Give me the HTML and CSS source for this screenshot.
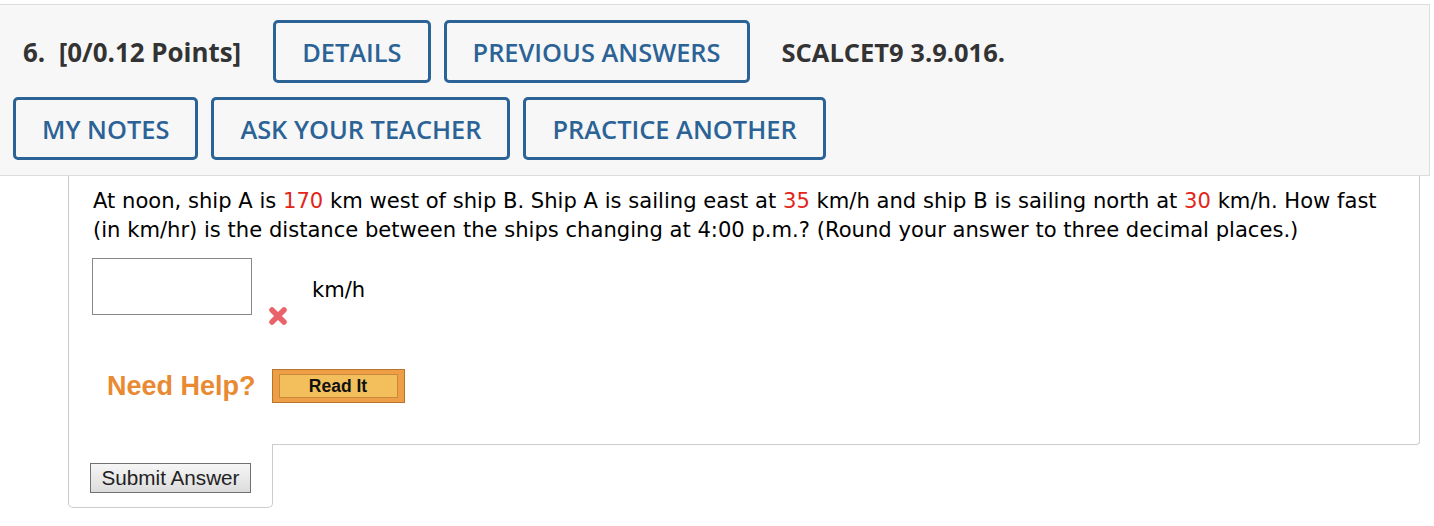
FILE: index.html
```html
<!DOCTYPE html>
<html>
<head>
<meta charset="utf-8">
<link rel="stylesheet" href="styles.css">
</head>
<body>
<div class="header">
  <div class="row row-top">
    <span class="qnum">6.&nbsp; [0/0.12 Points]</span>
    <span class="btn">DETAILS</span>
    <span class="btn">PREVIOUS ANSWERS</span>
    <span class="qref">SCALCET9 3.9.016.</span>
  </div>
  <div class="row">
    <span class="btn">MY NOTES</span>
    <span class="btn">ASK YOUR TEACHER</span>
    <span class="btn">PRACTICE ANOTHER</span>
  </div>
</div>
<div class="qbody">
  <p class="question">At noon, ship A is <span class="red">170</span> km west of ship B. Ship A is sailing east at <span class="red">35</span> km/h and ship B is sailing north at <span class="red">30</span> km/h. How fast (in km/hr) is the distance between the ships changing at 4:00 p.m.? (Round your answer to three decimal places.)</p>
  <div class="answer-row">
    <input class="answer" type="text">
    <svg class="xmark" width="22" height="22" viewBox="0 0 22 22">
      <path d="M5 5 L17 17 M17 5 L5 17" stroke="#e8646a" stroke-width="5.5" stroke-linecap="round" fill="none"/>
    </svg>
    <span class="unit">km/h</span>
  </div>
  <div class="help-row">
    <span class="need-help">Need Help?</span>
    <span class="readit"><span class="readit-inner">Read It</span></span>
  </div>
</div>
<div class="submit-tab">
  <button class="submit">Submit Answer</button>
</div>
</body>
</html>
```

FILE: styles.css
```css
body {
  margin: 0;
  background: #ffffff;
  font-family: "DejaVu Sans", Verdana, sans-serif;
}

.header {
  margin-top: 4px;
  width: 1430px;
  box-sizing: border-box;
  background: #f7f7f7;
  border: 1px solid #dddddd;
  border-left: none;
  padding: 15px 0 15px 13px;
  display: flex;
  flex-direction: column;
  gap: 14px;
  font-family: "Open Sans", sans-serif;
}

.row {
  display: flex;
  align-items: center;
  gap: 13px;
}

.row-top {
  padding-left: 10px;
}

.qnum, .qref {
  font-weight: 700;
  font-size: 25.9px;
  color: #333333;
}

.qref {
  font-size: 25.5px;
  margin-left: 19px;
}

.qnum {
  margin-right: 19px;
}

.btn {
  box-sizing: border-box;
  height: 63px;
  display: flex;
  align-items: center;
  padding: 0 26px;
  border: 3px solid #2c6396;
  border-radius: 5px;
  color: #2c6396;
  font-weight: 600;
  font-size: 25.4px;
  background: #f7f7f7;
}

.qbody {
  margin-left: 68px;
  width: 1352px;
  box-sizing: border-box;
  border: 1px solid #cccccc;
  border-top: none;
  border-bottom-right-radius: 4px;
  padding: 10px 24px 41px 24px;
}

.question {
  margin: 0;
  font-size: 21.1px;
  line-height: 29px;
  color: #000000;
}

.red {
  color: #e3261a;
}

.answer-row {
  display: flex;
  align-items: flex-start;
  margin-top: 14px;
}

.answer {
  box-sizing: border-box;
  width: 160px;
  height: 57px;
  margin: 0 0 0 -1px;
  border: 1px solid #888888;
  background: #ffffff;
}

.xmark {
  margin: 47px 0 0 15px;
  filter: blur(0.6px);
}

.unit {
  margin: 19px 0 0 23px;
  font-size: 21.1px;
  color: #000000;
}

.help-row {
  display: flex;
  align-items: center;
  gap: 16px;
  margin-top: 42px;
  padding-left: 14px;
}

.need-help {
  font-family: "Liberation Sans", Arial, sans-serif;
  font-weight: 700;
  font-size: 27px;
  color: #e98a33;
}

.readit {
  box-sizing: border-box;
  width: 133px;
  height: 34px;
  border: 1px solid #b5742f;
  background: #ee9f45;
  padding: 4px 6px;
  display: flex;
}

.readit-inner {
  flex: 1;
  border: 1px solid #c8893a;
  background: #f3bf5c;
  display: flex;
  align-items: center;
  justify-content: center;
  font-family: "Liberation Sans", Arial, sans-serif;
  font-weight: 700;
  font-size: 17.5px;
  color: #111111;
}

.submit-tab {
  margin: -1px 0 0 68px;
  width: 205px;
  box-sizing: border-box;
  background: #ffffff;
  border: 1px solid #cccccc;
  border-top: none;
  border-radius: 0 0 5px 5px;
  padding: 19px 21px 14px 21px;
  position: relative;
}

.submit {
  box-sizing: border-box;
  width: 161px;
  height: 30px;
  margin: 0;
  padding: 0;
  border: 1px solid #707070;
  background: linear-gradient(#f6f6f6, #dcdcdc);
  font-family: "Liberation Sans", Arial, sans-serif;
  font-size: 20.7px;
  color: #222222;
}
```
